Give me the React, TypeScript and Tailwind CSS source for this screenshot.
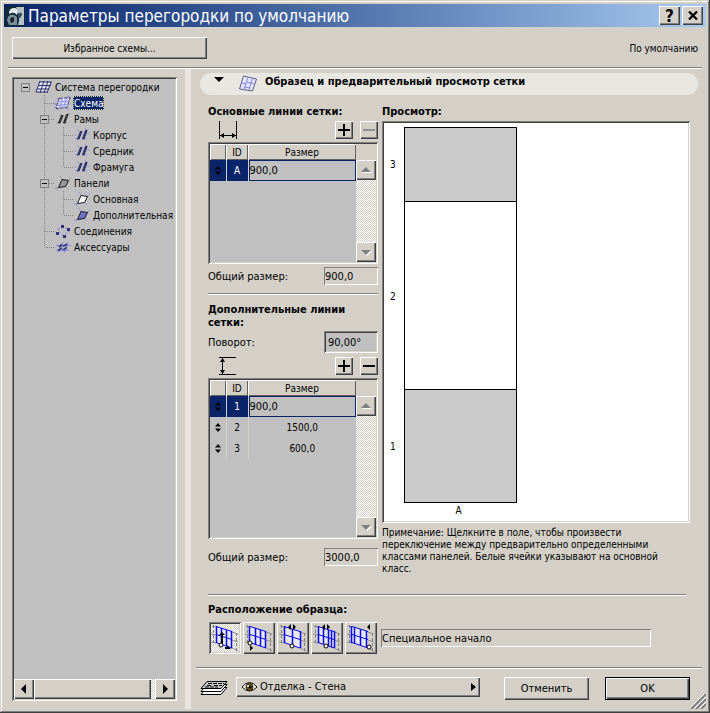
import { useState } from "react";
import type { ReactNode } from "react";

const raised =
  "bg-[#d4d0c8] shadow-[inset_1px_1px_0_#fff,inset_-1px_-1px_0_#404040,inset_-2px_-2px_0_#808080]";
const sunken =
  "shadow-[inset_1px_1px_0_#808080,inset_-1px_-1px_0_#fff,inset_2px_2px_0_#404040,inset_-2px_-2px_0_#d4d0c8]";
const thinSunken = "bg-[#d4d0c8] shadow-[inset_1px_1px_0_#808080,inset_-1px_-1px_0_#fff]";
const checker =
  "bg-[repeating-conic-gradient(#fff_0_25%,#d4d0c8_0_50%)] bg-[length:2px_2px]";

type IconKind = "grid" | "scheme" | "frames" | "frame" | "panels" | "main" | "extra" | "joints" | "accessories";

interface TreeItem {
  id: string;
  label: string;
  icon: IconKind;
  // one letter per guide cell: e = expander, t = branch, l = last branch, i = line, x = expander on a line
  guides: string;
}

const treeItems: TreeItem[] = [
  { id: "system", label: "Система перегородки", icon: "grid", guides: "e" },
  { id: "scheme", label: "Схема", icon: "scheme", guides: " t" },
  { id: "frames", label: "Рамы", icon: "frames", guides: " x" },
  { id: "body", label: "Корпус", icon: "frame", guides: " it" },
  { id: "mullion", label: "Средник", icon: "frame", guides: " it" },
  { id: "transom", label: "Фрамуга", icon: "frame", guides: " il" },
  { id: "panels", label: "Панели", icon: "panels", guides: " x" },
  { id: "main", label: "Основная", icon: "main", guides: " it" },
  { id: "extra", label: "Дополнительная", icon: "extra", guides: " il" },
  { id: "joints", label: "Соединения", icon: "joints", guides: " t" },
  { id: "accessories", label: "Аксессуары", icon: "accessories", guides: " l" },
];

function Guide({ kind }: { kind: string }) {
  const box = kind === "e" || kind === "x";
  return (
    <svg width="19" height="16" className="shrink-0" shapeRendering="crispEdges" aria-hidden="true">
      <g stroke="#808080" strokeDasharray="1 1" fill="none">
        {"tix".includes(kind) && <path d="M9.500 0V16" />}
        {kind === "l" && <path d="M9.500 0V8" />}
        {"tlx".includes(kind) && <path d="M10 8.500H19" />}
      </g>
      {box && (
        <g>
          <rect x="5.500" y="4.500" width="8" height="8" fill="#c0c0c0" stroke="#808080" />
          <path d="M7 8.500H12" stroke="#000" />
        </g>
      )}
    </svg>
  );
}

function TreeIcon({ kind }: { kind: IconKind }) {
  let art: ReactNode = null;
  if (kind === "grid") {
    art = (
      <>
        <path d="M5 3H16L12 13H1Z" fill="#e8e8f8" />
        <path d="M5 2L1 13M9 2L5 14M13 2L9 14M16 3L12 14M4 3H17M3 6.500H16M2 10H14M1 13H12" stroke="#30306c" />
      </>
    );
  } else if (kind === "scheme") {
    art = (
      <>
        <path d="M1 12L4 15M3 3L6 4M14 1L17 3M12 13L15 15M0 9H4" stroke="#8080e0" />
        <path d="M5 3.500L16 2.500L13 12.500L2 13.500Z" fill="#dcdcf4" stroke="#404070" strokeDasharray="4 1" />
        <path d="M8.500 3L5.500 13M12.500 3L9.500 13M4 7L15 6M3 10.500L14 9.500" stroke="#9090e8" />
      </>
    );
  } else if (kind === "frames" || kind === "frame") {
    const dark = kind === "frames" ? "#202020" : "#28285c";
    const fill = kind === "frames" ? "#606060" : "#4848a0";
    art = (
      <>
        {kind === "frame" && (
          <path d="M4 2L7 5M12 1L15 4M2 12H5M11 11L14 13M2 8H4M14 7H17" stroke="#9494e0" />
        )}
        {kind === "frames" && <path d="M2 12H5M10 12H13M5 4H8M13 3H16" stroke="#989898" />}
        <path d="M7.500 4.500H9L6 12H4.500ZM12.500 3.500H14L11 12H9.500Z" fill={fill} stroke={dark} />
      </>
    );
  } else if (kind === "panels" || kind === "main" || kind === "extra") {
    const fill = kind === "panels" ? "#989898" : kind === "main" ? "#fff" : "#7070cc";
    const line = kind === "panels" ? "#989898" : "#9494e0";
    art = (
      <>
        <path d="M6 1L8 4M1 13H4M12 12L14 14M14 5L17 3M4 12L3 15" stroke={line} />
        <path d="M8 4.500L14.500 5.500L11.500 11.500L4.500 12.500L6 9Z" fill={fill} stroke="#181820" />
      </>
    );
  } else if (kind === "joints") {
    art = (
      <>
        <path d="M4 6L11 4L15 9L8 13Z" stroke="#8080e0" strokeDasharray="2 2" />
        <path d="M7 2H10V5H7ZM13 5H16V8H13ZM2 9H5V12H2ZM9 12H12V15H9Z" fill="#30307c" stroke="none" />
      </>
    );
  } else {
    art = (
      <>
        <path d="M2 6.500H17M2 11.500H15M5 13L9 3M10 14L14 3" stroke="#8888dc" />
        <path d="M5 8L8 5.500M9 7.500L13 5M4 11.500L8 9M9 11L13 8.500" stroke="#383884" strokeWidth="2" />
      </>
    );
  }
  return (
    <svg width="19" height="16" viewBox="0 0 19 16" fill="none" className="shrink-0" aria-hidden="true">
      {art}
    </svg>
  );
}

function SquareButton({ label, minus, disabled }: { label: string; minus?: boolean; disabled?: boolean }) {
  return (
    <button aria-label={label} disabled={disabled} className={`flex size-[18px] items-center justify-center ${raised}`}>
      <svg width="18" height="18" shapeRendering="crispEdges" aria-hidden="true">
        <path d={minus ? "M3 8H15V10H3Z" : "M3 8H15V10H3ZM8 3H10V15H8Z"} fill={disabled ? "#909090" : "#000"} />
      </svg>
    </button>
  );
}

function ArrowButton({ dir, disabled }: { dir: "up" | "down" | "left" | "right"; disabled?: boolean }) {
  const paths = {
    up: "M5 12H15L10 7Z",
    down: "M5 8H15L10 13Z",
    left: "M12 5V15L7 10Z",
    right: "M8 5V15L13 10Z",
  };
  return (
    <button aria-label={dir} disabled={disabled} className={`size-5 shrink-0 ${raised}`}>
      <svg width="20" height="20" aria-hidden="true">
        {disabled && <path d={paths[dir]} fill="#fff" transform="translate(1 1)" />}
        <path d={paths[dir]} fill={disabled ? "#808080" : "#000"} />
      </svg>
    </button>
  );
}

interface Line {
  id: string;
  size: string;
}

function SizeTable({ lines, label }: { lines: Line[]; label: string }) {
  const head = "bg-[#d4d0c8] font-normal shadow-[inset_1px_1px_0_#fff,inset_-1px_-1px_0_#606060]";
  return (
    <div className={`flex flex-1 p-[2px] ${sunken}`}>
      <div className="flex-1 bg-[#c0c0c0]">
        <table className="w-full table-fixed border-collapse text-[10px]" aria-label={label}>
          <colgroup>
            <col className="w-4" />
            <col className="w-[22px]" />
            <col />
          </colgroup>
          <thead>
            <tr className="h-4">
              <th className={head}></th>
              <th className={head}>ID</th>
              <th className={head}>Размер</th>
            </tr>
          </thead>
          <tbody>
            {lines.map((line, i) => (
              <tr key={line.id} className={i === 0 ? "h-[21px] bg-[#0a246a] text-white" : "h-[21px]"}>
                <td className="border-r border-[#d4d0c8] p-0">
                  <svg width="15" height="11" className="block" aria-hidden="true">
                    <path d="M5 4.500H11L8 1ZM5 6.500H11L8 10Z" fill="#000" />
                  </svg>
                </td>
                <td className="border-r border-[#d4d0c8] p-0 text-center">{line.id}</td>
                <td className="p-0 text-center">
                  {i === 0 ? (
                    <input
                      aria-label={`Размер ${line.id}`}
                      defaultValue={line.size}
                      className="block h-[21px] w-full border border-[#0a246a] bg-[#c0c0c0] text-[11px] text-black"
                    />
                  ) : (
                    line.size
                  )}
                </td>
              </tr>
            ))}
          </tbody>
        </table>
      </div>
      <div className="flex w-5 flex-col bg-[#d4d0c8] pt-4">
        <div className={`flex flex-1 flex-col justify-between ${checker}`}>
          <ArrowButton dir="up" disabled />
          <ArrowButton dir="down" disabled />
        </div>
      </div>
    </div>
  );
}

function Total({ id, value }: { id: string; value: string }) {
  return (
    <div className="flex items-center justify-between">
      <label htmlFor={id}>Общий размер:</label>
      <input id={id} readOnly value={value} className={`h-[18px] w-[54px] px-px ${thinSunken}`} />
    </div>
  );
}

// Marks and base point that tell the five origin modes apart
const origins = [
  {
    name: "Специальное начало",
    lines: "M7.500 4V21M12.500 6V22M17.500 8V24M22.500 9V26",
    marks: "M13 10L16 13H14V21H12V13H10ZM16 25H18V23L22 27H16Z",
    dot: [12, 23],
  },
  {
    name: "Начало",
    lines: "M6.500 4V21M12.500 6V23M17.500 8V24M22.500 9V26",
    marks: "M7 23L10 26L7 29Z",
    dot: [7, 21],
  },
  {
    name: "Центр линии",
    lines: "M7.500 4V21M15.500 7V23M23.500 9V26",
    marks: "M14 2V8L11 5ZM16 2V8L19 5Z",
    dot: [15, 24],
  },
  {
    name: "Центр ячейки",
    lines: "M7.500 4V21M12.500 6V22M17.500 8V24M20.500 9V25M23.500 9V26",
    marks: "M14 2V8L11 5ZM16 2V8L19 5Z",
    dot: [15, 24],
  },
  {
    name: "Конец",
    lines: "M6.500 4V21M9.500 5V21M15.500 7V23M21.500 9V25",
    marks: "M25 2V8L22 5Z",
    dot: [24, 25],
  },
];

function OriginIcon({ index }: { index: number }) {
  const o = origins[index];
  return (
    <svg width="32" height="32" viewBox="0 0 32 32" fill="none" aria-hidden="true">
      <path d="M3 4L7 5M23 10L29 12M2 12L7 13M23 18L29 20M2 20L7 21M23 26L29 29" stroke="#909090" />
      <path d="M4.500 3V22M27.500 11V29" stroke="#808080" strokeDasharray="3 2" />
      <path d="M7 4.500L23 9.500V26.500L7 20.500Z" fill="#e8e8f0" />
      <path d={o.lines} stroke="#0808f0" strokeWidth="1.500" />
      <path d="M7 4.500L23 9.500M7 12.500L23 17.500M7 20.500L23 26" stroke="#0808f0" />
      <path d={o.marks} fill="#000" />
      <circle cx={o.dot[0]} cy={o.dot[1]} r="2" fill="#fff" stroke="#000" />
    </svg>
  );
}

const cells = [
  { id: "3", size: 600, main: false },
  { id: "2", size: 1500, main: true },
  { id: "1", size: 900, main: false },
];

const Divider = ({ className }: { className: string }) => (
  <hr className={`h-[2px] border-0 border-t border-b border-t-[#808080] border-b-white ${className}`} />
);

export default function App() {
  const [selected, setSelected] = useState("scheme");
  const [origin, setOrigin] = useState(0);
  const [panels, setPanels] = useState(cells);

  const togglePanel = (id: string) =>
    setPanels(panels.map((p) => (p.id === id ? { ...p, main: !p.main } : p)));

  return (
    <div className="relative flex min-h-screen flex-col bg-[#d4d0c8] p-1 font-['DejaVu_Sans_Condensed','DejaVu_Sans',sans-serif] text-[11px] leading-[13px] text-black shadow-[inset_-1px_-1px_0_#404040,inset_1px_1px_0_#d4d0c8,inset_-2px_-2px_0_#808080,inset_2px_2px_0_#fff]">
      <header className="flex h-[23px] items-center bg-linear-to-r from-[#0a246a] to-[#a6caf0] pr-[3px] pl-px text-white">
        <svg width="20" height="20" viewBox="0 0 20 20" className="mr-[3px]" aria-hidden="true">
          <rect width="20" height="20" rx="1" fill="#0e2a3c" />
          <path d="M11 1H19V19H13Q16 10 11 1Z" fill="#b4c2c8" />
          <path d="M4 6Q5 2 9 2Q13 2 13 6L12 9Q9 5 4 8Z" fill="#e4ecf0" />
          <path d="M2 14Q3 8 9 9L12 11V19H4Z" fill="#7c8e98" />
          <path d="M5 14Q5 11 9 11V15Q8 17 6 17Z" fill="#1c2428" />
          <path d="M13 8Q17 5 17 9L15 12H13Z" fill="#384850" />
        </svg>
        <h1 className="flex-1 text-[17px] leading-[22px] whitespace-nowrap">Параметры перегородки по умолчанию</h1>
        <button aria-label="Справка" className={`mr-[2px] h-[19px] w-[21px] text-[17px] leading-[18px] font-bold text-black ${raised}`}>
          ?
        </button>
        <button aria-label="Закрыть" className={`flex h-[19px] w-[21px] items-center justify-center ${raised}`}>
          <svg width="10" height="9" aria-hidden="true">
            <path d="M1 0.500L9 8.500M9 0.500L1 8.500" stroke="#000" strokeWidth="2.200" />
          </svg>
        </button>
      </header>

      <div className="flex items-center justify-between pt-[10px] pr-2 pb-2 pl-2 text-[10px]">
        <button className={`h-[22px] w-[195px] ${raised}`}>Избранное схемы...</button>
        <span>По умолчанию</span>
      </div>
      <Divider className="mr-1 ml-1" />

      <div className="flex flex-1">
        <nav className="flex w-[181px] flex-col px-2 pt-[8px] pb-2">
          <div className={`flex flex-1 flex-col bg-[#c0c0c0] p-[2px] ${sunken}`}>
            <ul className="flex-1 overflow-hidden pl-[2px] text-[10px]">
              {treeItems.map((item) => (
                <li key={item.id} className="flex h-4 items-center whitespace-nowrap">
                  {item.guides.split("").map((g, i) => (
                    <Guide key={i} kind={g} />
                  ))}
                  <TreeIcon kind={item.icon} />
                  <button
                    onClick={() => setSelected(item.id)}
                    className={
                      item.id === selected
                        ? "h-[14px] bg-[#0a246a] px-px text-white outline-1 -outline-offset-1 outline-dotted outline-[#d8d890]"
                        : "px-px"
                    }
                  >
                    {item.label}
                  </button>
                </li>
              ))}
            </ul>
            <div className={`flex ${checker}`}>
              <ArrowButton dir="left" />
              <div className={`w-[117px] ${raised}`} />
              <div className="flex-1" />
              <ArrowButton dir="right" />
            </div>
          </div>
        </nav>
        <div className="w-[6px] bg-[#e9e6e1]" />

        <main className="flex min-w-0 flex-1 flex-col">
          <div className="mt-1 mr-2 ml-[9px] flex h-[22px] items-center rounded-full bg-[#e9e7e2] pl-[14px]">
            <button aria-label="Свернуть" className="mr-[14px] pb-[10px]">
              <svg width="10" height="5" className="block" aria-hidden="true">
                <path d="M0 0H10L5 5Z" fill="#000" />
              </svg>
            </button>
            <svg width="20" height="18" viewBox="0 0 20 18" fill="none" className="mr-[7px]" aria-hidden="true">
              <path d="M5.500 1L18.500 4L14.500 16L1.500 14Z" fill="#e4e4fa" stroke="#606080" />
              <path d="M10 2L6 15M14.500 3L11 15M8 7L17 9M3.500 8L8 9M6 12L12 13" stroke="#8888e8" />
            </svg>
            <h2 className="pb-[6px] font-bold whitespace-nowrap">Образец и предварительный просмотр сетки</h2>
          </div>

          <div className="mt-[10px] mr-4 ml-[17px] grid flex-1 grid-cols-[170px_minmax(0,1fr)] gap-1 pb-[19px]">
            <section className="flex flex-col pb-[9px]">
              <h3 className="font-bold">Основные линии сетки:</h3>
              <div className="mt-[3px] flex h-[18px] gap-[7px]">
                <svg width="20" height="18" className="mr-auto ml-[10px]" fill="none" aria-hidden="true">
                  <path d="M1.500 0V18M18.500 0V18M2 14.500H18" stroke="#000" shapeRendering="crispEdges" />
                  <path d="M2 14.500L6 12V17ZM18 14.500L14 12V17Z" fill="#000" />
                </svg>
                <SquareButton label="Добавить линию" />
                <SquareButton label="Удалить линию" minus disabled />
              </div>
              <div className="mt-[3px] mb-[3px] flex h-[122px]">
                <SizeTable label="Основные линии сетки" lines={[{ id: "A", size: "900,0" }]} />
              </div>
              <Total id="main-total" value="900,0" />
              <Divider className="mt-2 mb-2" />
              <h3 className="font-bold">Дополнительные линии сетки:</h3>
              <div className="mt-[2px] flex items-center justify-between">
                <label htmlFor="angle">Поворот:</label>
                <input id="angle" defaultValue="90,00°" className={`h-[22px] w-[54px] bg-[#c0c0c0] px-1 ${sunken}`} />
              </div>
              <div className="mt-1 flex h-[18px] gap-[7px]">
                <svg width="20" height="18" className="mr-auto ml-[10px]" fill="none" aria-hidden="true">
                  <path d="M1 0.500H18M1 17.500H18M4.500 1V17" stroke="#000" shapeRendering="crispEdges" />
                  <path d="M4.500 1L7 5H2ZM4.500 17L7 13H2Z" fill="#000" />
                </svg>
                <SquareButton label="Добавить дополнительную линию" />
                <SquareButton label="Удалить дополнительную линию" minus />
              </div>
              <div className="mt-[3px] mb-[9px] flex min-h-[160px] flex-1">
                <SizeTable
                  label="Дополнительные линии сетки"
                  lines={[
                    { id: "1", size: "900,0" },
                    { id: "2", size: "1500,0" },
                    { id: "3", size: "600,0" },
                  ]}
                />
              </div>
              <Total id="extra-total" value="3000,0" />
            </section>

            <section className="flex flex-col">
              <h3 className="font-bold">Просмотр:</h3>
              <div className={`mt-[3px] mb-1 flex flex-1 flex-col bg-white px-2 pt-[6px] pb-[6px] text-[10px] ${sunken}`}>
                <div className="flex flex-1 flex-col">
                  {panels.map((p, i) => (
                    <div key={p.id} className="flex basis-0" style={{ flexGrow: p.size }}>
                      <span className="flex w-[14px] items-center">{p.id}</span>
                      <button
                        aria-label={`Панель A${p.id}`}
                        onClick={() => togglePanel(p.id)}
                        className={`w-[113px] border-x border-b border-black ${i === 0 ? "border-t" : ""} ${p.main ? "bg-white" : "bg-[#cbcbcb]"}`}
                      />
                    </div>
                  ))}
                </div>
                <span className="mt-[2px] ml-[14px] w-[109px] text-center leading-3">A</span>
              </div>
              <p className="text-[10px] leading-3">
                Примечание: Щелкните в поле, чтобы произвести переключение между предварительно определенными классами
                панелей. Белые ячейки указывают на основной класс.
              </p>
            </section>
          </div>

          <Divider className="mr-5 ml-[17px]" />
          <h3 className="mt-[7px] ml-[17px] font-bold">Расположение образца:</h3>
          <div className="mt-[6px] mr-[55px] mb-[13px] ml-[18px] flex items-center gap-[2px]">
            {origins.map((o, i) => (
              <button
                key={o.name}
                aria-label={o.name}
                aria-pressed={origin === i}
                onClick={() => setOrigin(i)}
                className={`size-8 shrink-0 ${origin === i ? `${checker} ${sunken}` : raised}`}
              >
                <OriginIcon index={i} />
              </button>
            ))}
            <input
              aria-label="Начало образца"
              readOnly
              value={origins[origin].name}
              className={`ml-[2px] h-[18px] min-w-0 flex-1 px-px ${thinSunken}`}
            />
          </div>
          <Divider className="mr-1 ml-[5px]" />

          <footer className="mt-2 mr-4 mb-[9px] ml-[9px] flex h-[23px] items-start gap-2">
            <svg width="28" height="16" viewBox="0 0 28 16" className="mt-[3px]" aria-hidden="true">
              <g fill="#fff" stroke="#000">
                <path d="M7 7.500H27L21 14.500H1Z" />
                <path d="M7 4.500H27L21 11.500H1Z" />
                <path d="M7 1.500H27L21 8.500H1Z" fill="#c8c8c8" />
              </g>
              <path d="M8 3.500H24M7 5.500H12M14 5.500H22M5 7H18" stroke="#000" strokeDasharray="4 1" />
            </svg>
            <div className={`flex h-5 min-w-0 flex-1 items-center pr-1 pl-[5px] ${raised}`}>
              <svg width="17" height="12" viewBox="0 0 17 12" className="mr-[2px] shrink-0" aria-hidden="true">
                <path d="M1 6Q8.500 -3 16 6Q8.500 14 1 6Z" fill="#fff" stroke="#000" />
                <circle cx="8.500" cy="6" r="3.500" fill="#7a5a10" stroke="#201800" />
                <circle cx="9" cy="6" r="1.500" fill="#000" />
                <circle cx="7" cy="5" r="1" fill="#fff" />
              </svg>
              <select aria-label="Слой" className="min-w-0 flex-1 appearance-none bg-transparent leading-4">
                <option>Отделка - Стена</option>
              </select>
              <svg width="5" height="8" aria-hidden="true">
                <path d="M0 0L5 4L0 8Z" fill="#000" />
              </svg>
            </div>
            <button className={`ml-4 h-[23px] w-[85px] ${raised}`}>Отменить</button>
            <button className="ml-2 h-[23px] w-[85px] border border-black bg-[#d4d0c8] shadow-[inset_1px_1px_0_#fff,inset_-1px_-1px_0_#404040,inset_-2px_-2px_0_#808080]">
              OK
            </button>
          </footer>
        </main>
      </div>
      <svg width="15" height="15" className="pointer-events-none absolute right-1 bottom-1" aria-hidden="true">
        <path d="M0 15L15 0M5 15L15 5M10 15L15 10" stroke="#808080" strokeWidth="2" />
        <path d="M-1 14L14 -1M4 14L15 3M9 14L15 8" stroke="#fff" />
      </svg>
    </div>
  );
}
